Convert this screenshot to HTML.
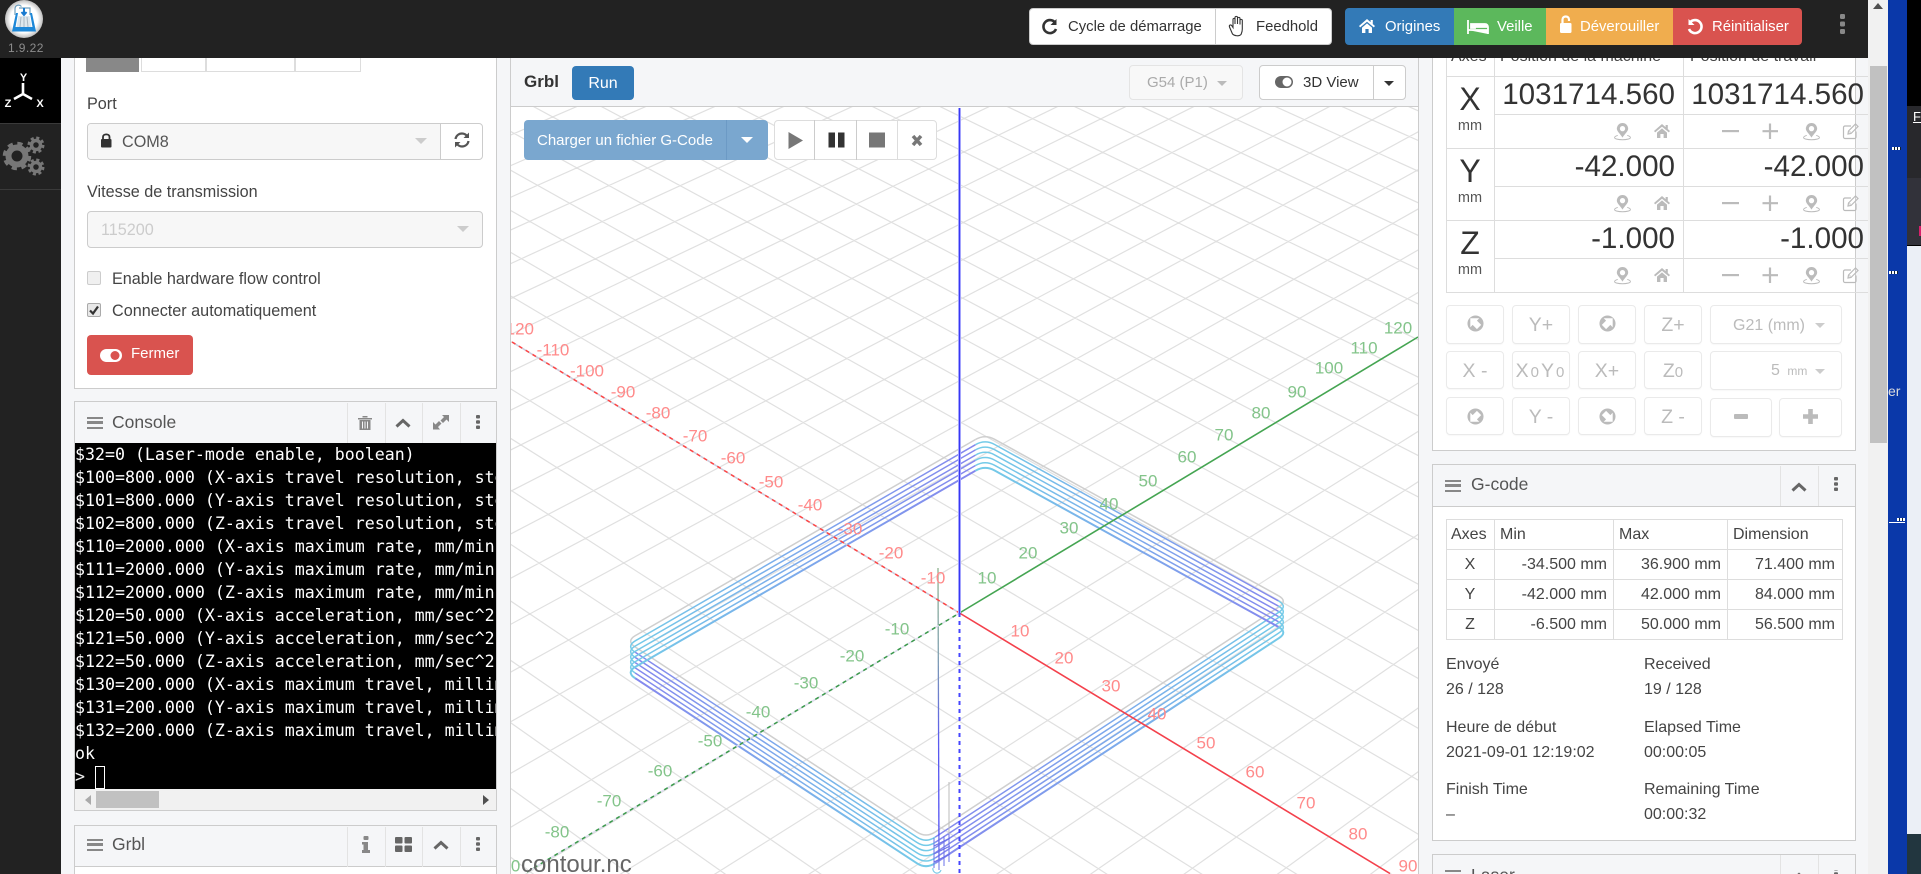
<!DOCTYPE html>
<html><head><meta charset="utf-8"><title>CNCjs</title>
<style>
*{box-sizing:border-box}
html,body{margin:0;padding:0;width:1921px;height:874px;overflow:hidden;background:#f5f6f8;font-family:"Liberation Sans",Arial,sans-serif;color:#333}
#root{position:relative;width:1921px;height:874px;overflow:hidden;background:#f5f6f8}
.a{position:absolute}
.t{position:absolute;white-space:nowrap;font-size:16px;line-height:20px}
.l16{font-size:16.2px}
.panel{position:absolute;background:#fff;border:1px solid #ccc}
.ph{position:absolute;left:0;right:0;top:0;height:42px;background:#f5f6f8;border-bottom:1px solid #ccc}
.ph .title{position:absolute;left:37px;top:10px;font-size:17.5px;line-height:21px;color:#555;white-space:nowrap}
.bars{position:absolute;left:12px;top:15px;width:16px;height:12px;border-top:2.5px solid #888;border-bottom:2.5px solid #888}
.bars:after{content:"";position:absolute;left:0;right:0;top:2.2px;height:2.5px;background:#888}
.div{position:absolute;top:1px;height:40px;width:1px;background:#e3e3e3}
.btn{position:absolute;border:1px solid #eaeaea;border-radius:4px;background:#fff;color:#bbb;text-align:center;box-shadow:0 1px 1px rgba(0,0,0,.03)}
.line{position:absolute;background:#ddd}
.h{height:1px}.v{width:1px}
.caret{position:absolute;width:0;height:0;border-left:6px solid transparent;border-right:6px solid transparent;border-top:6px solid #ccc}
.num{position:absolute;white-space:nowrap;font-size:29.6px;line-height:36px;color:#333;text-align:right}
.c{position:absolute;white-space:nowrap;font-size:16px;line-height:20px;color:#444;margin-top:1px}
.r{text-align:right}
svg{position:absolute;overflow:visible}
.mono div{height:23px;line-height:23px;white-space:pre}
.ctl{font-size:19.5px;line-height:38px}
</style></head><body>
<div id="root">

<svg width="0" height="0" style="position:absolute"><defs>
<symbol id="home" viewBox="0 0 16 14" overflow="visible"><path d="M8 0L16 7 14.8 8.4 8 2.7 1.2 8.4 0 7zM11.6 1h2.2v4L11.6 3.2zM3 8.6L8 4.4 13 8.6V14H9.6V10H6.4V14H3z"/></symbol>
<symbol id="pin" viewBox="0 0 18 18" overflow="visible"><path fill-rule="evenodd" d="M9 0a6 6 0 0 1 6 6c0 3-4 6-6 9.5C7 12 3 9 3 6a6 6 0 0 1 6-6zM9 3.2a2.8 2.8 0 1 0 .01 0z"/><path d="M4 13.2C1.800 13.8.6 14.5.6 15.5c0 1.300 3.800 2.200 8.400 2.200s8.400-.9 8.400-2.200c0-1-1.200-1.700-3.400-2.300" fill="none" stroke-width="1" stroke="#bbb"/></symbol>
<symbol id="edit" viewBox="0 0 16 16" overflow="visible"><path d="M13 8.500V14a1.500 1.500 0 0 1-1.500 1.500H2A1.500 1.500 0 0 1 .5 14V4.500A1.500 1.500 0 0 1 2 3h6" fill="none" stroke="#bbb" stroke-width="1.200"/><path d="M5.500 8L12.500 1 15 3.500 8 10.500 5 11zM6.500 8.500L7.500 9.500" fill="none" stroke="#bbb" stroke-width="1.200"/></symbol>
<symbol id="arr" viewBox="0 0 18 18" overflow="visible"><circle cx="9" cy="9" r="8.500" fill="#bbb"/><path d="M3.500 3.500H13L10.500 6 15 10.500 10.500 15 6 10.500 3.500 13z" fill="#fff"/></symbol>
<symbol id="chev" viewBox="0 0 16 10" overflow="visible"><path d="M1.500 8.500L8 2.500 14.500 8.500" fill="none" stroke="#666" stroke-width="3"/></symbol>
<symbol id="dots" viewBox="0 0 4 14" overflow="visible"><rect x="0" y="0" width="4" height="3.500" rx="1" fill="#666"/><rect x="0" y="5.300" width="4" height="3.500" rx="1" fill="#666"/><rect x="0" y="10.500" width="4" height="3.500" rx="1" fill="#666"/></symbol>
</defs></svg>

<!-- center panel -->
<div class="a" style="left:510px;top:58px;width:909px;height:816px;background:#fff;border-left:1px solid #ccc;border-right:1px solid #ccc"></div>
<svg id="scene" class="a" style="left:511px;top:107px;overflow:hidden" width="907" height="767" viewBox="511 107 907 767">
<defs id="gd"><linearGradient id="pl" gradientUnits="userSpaceOnUse" x1="938" y1="568" x2="938" y2="860"><stop offset="0" stop-color="#8fb38f"/><stop offset=".3" stop-color="#7f9fb0"/><stop offset=".6" stop-color="#5a5af0"/><stop offset="1" stop-color="#4a4af5"/></linearGradient></defs>
<g id="grid" fill="none"></g>
<g id="path" fill="none"></g>
<path d="M938 568L939 860" stroke="url(#pl)" stroke-width="1.300"/>
<path d="M949 782V838" stroke="#bbb" stroke-width="1"/>
<path d="M934 838V868M939 836V870M944 836V866M949 834V862M934 846L950 838M934 854L950 846M934 862L950 854" stroke="#6a70e8" stroke-width="1" fill="none"/>
<path d="M933 868a4 4 0 0 0 8 2" stroke="#7fcbe8" stroke-width="1.200" fill="none"/>
<!-- axes -->
<path d="M512 342L959.500 613" stroke="#ccd" stroke-width="1.500"/>
<path d="M512 342L959.500 613" stroke="#f44" stroke-width="1.500" stroke-dasharray="4 4"/>
<path d="M959.500 613L1390 873.500" stroke="#f4414c" stroke-width="1.600"/>
<path d="M527 872L959.500 613" stroke="#dde" stroke-width="1.500"/>
<path d="M527 872L959.500 613" stroke="#3a9a4a" stroke-width="1.500" stroke-dasharray="4 4"/>
<path d="M959.500 613L1418 337" stroke="#45a552" stroke-width="1.600"/>
<path d="M959.500 108V613" stroke="#c9c9ff" stroke-width="3"/>
<path d="M959.500 108V613" stroke="#3737f5" stroke-width="1.500"/>
<path d="M959.500 613V874" stroke="#4646ff" stroke-width="2" stroke-dasharray="4 4"/>
<g font-family="Liberation Sans" font-size="17" text-anchor="middle" dominant-baseline="central" fill="#ff8a8a">
<text x="1020" y="631">10</text><text x="1064" y="658">20</text><text x="1111" y="686">30</text><text x="1157" y="714">40</text><text x="1206" y="743">50</text><text x="1255" y="772">60</text><text x="1306" y="803">70</text><text x="1358" y="834">80</text><text x="1408" y="866">90</text>
<text x="933" y="578">-10</text><text x="891" y="553">-20</text><text x="850" y="529">-30</text><text x="810" y="505">-40</text><text x="771" y="482">-50</text><text x="733" y="458">-60</text><text x="695" y="436">-70</text><text x="658" y="413">-80</text><text x="623" y="392">-90</text><text x="587" y="371">-100</text><text x="553" y="350">-110</text><text x="517" y="329">-120</text>
</g>
<g font-family="Liberation Sans" font-size="17" text-anchor="middle" dominant-baseline="central" fill="#83c48a">
<text x="987" y="578">10</text><text x="1028" y="553">20</text><text x="1069" y="528">30</text><text x="1109" y="504">40</text><text x="1148" y="481">50</text><text x="1187" y="457">60</text><text x="1224" y="435">70</text><text x="1261" y="413">80</text><text x="1297" y="392">90</text><text x="1329" y="368">100</text><text x="1364" y="348">110</text><text x="1398" y="328">120</text>
<text x="897" y="629">-10</text><text x="852" y="656">-20</text><text x="806" y="683">-30</text><text x="758" y="712">-40</text><text x="710" y="741">-50</text><text x="660" y="771">-60</text><text x="609" y="801">-70</text><text x="557" y="832">-80</text><text x="508" y="866">-90</text>
</g>
<text x="521" y="872" font-family="Liberation Sans" font-size="24" fill="#666">contour.nc</text>
</svg>

<!-- center header -->
<div class="a" style="left:511px;top:58px;width:907px;height:49px;background:#f5f6f8;border-bottom:1px solid #ccc"></div>
<div class="t" style="left:524px;top:72px;font-weight:bold;font-size:17px;color:#333">Grbl</div>
<div class="a" style="left:572px;top:66px;width:62px;height:34px;background:#337ab7;border-radius:4px;color:#fff;text-align:center;font-size:16px;line-height:36px">Run</div>
<div class="a" style="left:1129px;top:65px;width:114px;height:35px;background:#f8f8f8;border:1px solid #e4e4e4;border-radius:4px;color:#aaa;font-size:15px;line-height:33px;padding-left:17px">G54 (P1)<span class="caret" style="left:87px;top:15px;border-top-color:#bbb;border-left-width:5px;border-right-width:5px;border-top-width:5px"></span></div>
<div class="a" style="left:1259px;top:65px;width:147px;height:35px;background:#fff;border:1px solid #ccc;border-radius:4px;color:#333;font-size:15px;line-height:33px">
<span class="a" style="left:43px;top:0;white-space:nowrap">3D View</span>
<span class="a" style="left:113px;top:0;width:1px;height:33px;background:#ccc"></span>
<span class="caret" style="left:124px;top:15px;border-top-color:#333;border-left-width:5px;border-right-width:5px;border-top-width:5px"></span>
<svg style="left:15px;top:10px" width="18" height="12"><rect x="0" y="0" width="18" height="12" rx="6" fill="#666"/><circle cx="12" cy="6" r="4.500" fill="#fff"/></svg>
</div>
<div class="a" style="left:524px;top:120px;width:244px;height:40px;background:#7aa7cf;border-radius:4px;color:#fff;font-size:15px;line-height:42px;padding-left:13px">Charger un fichier G-Code
<span class="a" style="left:202px;top:0;width:1px;height:40px;background:#6c9ac5"></span>
<span class="caret" style="left:217px;top:17px;border-top-color:#fff"></span></div>
<div class="a" style="left:774px;top:120px;width:163px;height:40px;background:#fff;border:1px solid #ddd;border-radius:4px"></div>
<div class="a" style="left:814px;top:120px;width:1px;height:40px;background:#ccc"></div>
<div class="a" style="left:856px;top:120px;width:1px;height:40px;background:#ccc"></div>
<div class="a" style="left:897px;top:120px;width:1px;height:40px;background:#ddd"></div>
<svg style="left:774px;top:120px" width="163" height="40">
<path d="M14.500 12V29L29 20.500z" fill="#777"/>
<rect x="54.500" y="12.500" width="6.500" height="15" fill="#333"/><rect x="64" y="12.500" width="6.500" height="15" fill="#333"/>
<rect x="95" y="12.500" width="16" height="15" fill="#777"/>
<path d="M139 16L147 25M147 16L139 25" stroke="#777" stroke-width="3.500"/>
</svg>

<!-- Right column: axes widget -->
<div class="a" style="left:1868px;top:0;width:20px;height:874px;background:#f1f1f1"></div>
<div class="a" style="left:1870px;top:66px;width:17px;height:377px;background:#c1c1c1"></div>
<svg style="left:1873px;top:3px" width="10" height="7"><path d="M5 0L10 6H0z" fill="#505050"/></svg>
<div class="a" style="left:1888px;top:0;width:19px;height:874px;background:#0a38a9"></div>
<div class="a" style="left:1907px;top:0;width:14px;height:106px;background:#000"></div>
<div class="a" style="left:1907px;top:106px;width:14px;height:72px;background:#28282c"></div>
<div class="a" style="left:1907px;top:178px;width:14px;height:67px;background:#32323a"></div>
<div class="a" style="left:1907px;top:245px;width:14px;height:1px;background:#000"></div>
<div class="a" style="left:1907px;top:246px;width:14px;height:588px;background:#ebeff6"></div>
<div class="a" style="left:1907px;top:834px;width:14px;height:40px;background:#22363f"></div>
<div class="a" style="left:1919px;top:226px;width:2px;height:10px;background:#d8206a"></div>
<div class="a" style="left:1913px;top:108px;overflow:hidden;width:8px;height:18px;font-size:13px;line-height:18px;color:#fff;text-decoration:underline">Fi</div>
<div class="a" style="left:1892px;top:147px;width:9px;height:3px;background:repeating-linear-gradient(90deg,#fff 0 2px,#123 2px 3px)"></div>
<div class="a" style="left:1889px;top:271px;width:9px;height:3px;background:repeating-linear-gradient(90deg,#fff 0 2px,#123 2px 3px)"></div>
<div class="a" style="left:1888px;top:383px;font-size:14px;line-height:16px;color:#ddd">er</div>
<div class="a" style="left:1889px;top:519px;width:16px;height:4px;border-bottom:1px solid #fff"></div>
<div class="a" style="left:1897px;top:518px;width:8px;height:3px;background:repeating-linear-gradient(90deg,#fff 0 2px,#123 2px 3px)"></div>

<div class="panel" style="left:1432px;top:58px;width:424px;height:393px;border-top:0"></div>
<div class="a" style="left:1432px;top:58px;width:436px;height:18px;overflow:hidden">
<div class="t" style="left:19px;top:-11px;color:#444">Axes</div>
<div class="t" style="left:68px;top:-11px;color:#444">Position de la machine</div>
<div class="t" style="left:258px;top:-11px;color:#444">Position de travail</div>
</div>

<!-- table lines -->
<div class="line v" style="left:1446px;top:58px;height:235px"></div>
<div class="line v" style="left:1494px;top:58px;height:235px"></div>
<div class="line v" style="left:1683px;top:58px;height:235px"></div>
<div class="line h" style="left:1446px;top:76px;width:422px"></div>
<div class="line h" style="left:1494px;top:114px;width:374px"></div>
<div class="line h" style="left:1446px;top:148px;width:422px"></div>
<div class="line h" style="left:1494px;top:186px;width:374px"></div>
<div class="line h" style="left:1446px;top:220px;width:422px"></div>
<div class="line h" style="left:1494px;top:258px;width:374px"></div>
<div class="line h" style="left:1446px;top:292px;width:422px"></div>

<div class="num" style="left:1450px;width:40px;top:81px;text-align:center;font-size:32px">X</div>
<div class="num" style="left:1450px;width:40px;top:153px;text-align:center;font-size:32px">Y</div>
<div class="num" style="left:1450px;width:40px;top:225px;text-align:center;font-size:32px">Z</div>
<div class="t" style="left:1450px;width:40px;top:116px;text-align:center;font-size:14.500px;color:#555">mm</div>
<div class="t" style="left:1450px;width:40px;top:188px;text-align:center;font-size:14.500px;color:#555">mm</div>
<div class="t" style="left:1450px;width:40px;top:260px;text-align:center;font-size:14.500px;color:#555">mm</div>

<div class="num" style="left:1475px;width:200px;top:77px">1031714.560</div>
<div class="num" style="left:1664px;width:200px;top:77px">1031714.560</div>
<div class="num" style="left:1475px;width:200px;top:149px">-42.000</div>
<div class="num" style="left:1664px;width:200px;top:149px">-42.000</div>
<div class="num" style="left:1475px;width:200px;top:221px">-1.000</div>
<div class="num" style="left:1664px;width:200px;top:221px">-1.000</div>

<svg style="left:1610px;top:122px" width="250" height="170" fill="#bbb">
<g>
<use href="#pin" x="4" y="1" width="17" height="17"/>
<use href="#home" x="44" y="2" width="16" height="14"/>
<rect x="112" y="8" width="17" height="2.200"/>
<path d="M160 1.500V17M152.500 9.200H168" stroke="#bbb" stroke-width="2.200" fill="none"/>
<use href="#pin" x="193" y="1" width="17" height="17"/>
<use href="#edit" x="233" y="1" width="16" height="16"/>
</g>
<g transform="translate(0,72)"><use href="#pin" x="4" y="1" width="17" height="17"/><use href="#home" x="44" y="2" width="16" height="14"/><rect x="112" y="8" width="17" height="2.200"/><path d="M160 1.500V17M152.500 9.200H168" stroke="#bbb" stroke-width="2.200" fill="none"/><use href="#pin" x="193" y="1" width="17" height="17"/><use href="#edit" x="233" y="1" width="16" height="16"/></g>
<g transform="translate(0,144)"><use href="#pin" x="4" y="1" width="17" height="17"/><use href="#home" x="44" y="2" width="16" height="14"/><rect x="112" y="8" width="17" height="2.200"/><path d="M160 1.500V17M152.500 9.200H168" stroke="#bbb" stroke-width="2.200" fill="none"/><use href="#pin" x="193" y="1" width="17" height="17"/><use href="#edit" x="233" y="1" width="16" height="16"/></g>
</svg>

<!-- jog -->
<div class="btn ctl" style="left:1446px;top:305px;width:58px;height:39px"></div>
<div class="btn ctl" style="left:1512px;top:305px;width:58px;height:39px">Y+</div>
<div class="btn ctl" style="left:1578px;top:305px;width:58px;height:39px"></div>
<div class="btn ctl" style="left:1644px;top:305px;width:58px;height:39px">Z+</div>
<div class="btn" style="left:1710px;top:305px;width:132px;height:39px;font-size:16px;line-height:39px;text-align:left;padding-left:22px">G21 (mm)<span class="caret" style="left:104px;top:17px;border-left-width:5px;border-right-width:5px;border-top-width:5px"></span></div>
<div class="btn ctl" style="left:1446px;top:351px;width:58px;height:38px">X -</div>
<div class="btn ctl" style="left:1512px;top:351px;width:58px;height:38px;letter-spacing:2px">X<span style="font-size:15px">0</span>Y<span style="font-size:15px">0</span></div>
<div class="btn ctl" style="left:1578px;top:351px;width:58px;height:38px">X+</div>
<div class="btn ctl" style="left:1644px;top:351px;width:58px;height:38px">Z<span style="font-size:15px">0</span></div>
<div class="btn" style="left:1710px;top:351px;width:132px;height:39px;font-size:16px;line-height:38px;text-align:left;padding-left:60px">5 <span style="font-size:12px;margin-left:3px">mm</span><span class="caret" style="left:104px;top:17px;border-left-width:5px;border-right-width:5px;border-top-width:5px"></span></div>
<div class="btn ctl" style="left:1446px;top:397px;width:58px;height:38px"></div>
<div class="btn ctl" style="left:1512px;top:397px;width:58px;height:38px">Y -</div>
<div class="btn ctl" style="left:1578px;top:397px;width:58px;height:38px"></div>
<div class="btn ctl" style="left:1644px;top:397px;width:58px;height:38px">Z -</div>
<div class="btn ctl" style="left:1710px;top:398px;width:62px;height:39px"></div>
<div class="btn ctl" style="left:1779px;top:398px;width:63px;height:39px"></div>
<svg style="left:1467px;top:315px" width="17" height="17"><use href="#arr" width="17" height="17"/></svg>
<svg style="left:1599px;top:315px" width="17" height="17"><g transform="rotate(90 8.500 8.500)"><use href="#arr" width="17" height="17"/></g></svg>
<svg style="left:1467px;top:408px" width="17" height="17"><g transform="rotate(-90 8.500 8.500)"><use href="#arr" width="17" height="17"/></g></svg>
<svg style="left:1599px;top:408px" width="17" height="17"><g transform="rotate(180 8.500 8.500)"><use href="#arr" width="17" height="17"/></g></svg>
<div class="a" style="left:1734px;top:414px;width:14px;height:5px;background:#bbb;border-radius:1px"></div>
<svg style="left:1803px;top:409px" width="15" height="15"><path d="M5.200 0H9.800V5.200H15V9.800H9.800V15H5.200V9.800H0V5.200H5.200z" fill="#bbb"/></svg>

<!-- G-code -->
<div class="panel" style="left:1432px;top:464px;width:424px;height:377px">
<div class="ph"><div class="bars"></div><div class="title" style="left:38px;top:9px">G-code</div>
<div class="div" style="left:347px"></div><div class="div" style="left:385px"></div></div>
</div>
<svg style="left:1791px;top:482px" width="16" height="10"><use href="#chev" width="16" height="10"/></svg>
<svg style="left:1834px;top:477px" width="4" height="14"><use href="#dots" width="4" height="14"/></svg>
<div class="a" style="left:1446px;top:519px;width:397px;height:121px;border:1px solid #ddd"></div>
<div class="line h" style="left:1446px;top:549px;width:397px"></div>
<div class="line h" style="left:1446px;top:579px;width:397px"></div>
<div class="line h" style="left:1446px;top:609px;width:397px"></div>
<div class="line v" style="left:1494px;top:519px;height:121px"></div>
<div class="line v" style="left:1613px;top:519px;height:121px"></div>
<div class="line v" style="left:1727px;top:519px;height:121px"></div>
<div class="c" style="left:1451px;top:524px">Axes</div><div class="c" style="left:1500px;top:524px">Min</div><div class="c" style="left:1619px;top:524px">Max</div><div class="c" style="left:1733px;top:524px">Dimension</div>
<div class="c" style="left:1446px;width:48px;text-align:center;top:554px">X</div>
<div class="c" style="left:1446px;width:48px;text-align:center;top:584px">Y</div>
<div class="c" style="left:1446px;width:48px;text-align:center;top:614px">Z</div>
<div class="c r" style="left:1467px;width:140px;top:554px">-34.500 mm</div><div class="c r" style="left:1581px;width:140px;top:554px">36.900 mm</div><div class="c r" style="left:1695px;width:140px;top:554px">71.400 mm</div>
<div class="c r" style="left:1467px;width:140px;top:584px">-42.000 mm</div><div class="c r" style="left:1581px;width:140px;top:584px">42.000 mm</div><div class="c r" style="left:1695px;width:140px;top:584px">84.000 mm</div>
<div class="c r" style="left:1467px;width:140px;top:614px">-6.500 mm</div><div class="c r" style="left:1581px;width:140px;top:614px">50.000 mm</div><div class="c r" style="left:1695px;width:140px;top:614px">56.500 mm</div>
<div class="c" style="left:1446px;top:654px">Envoyé</div><div class="c" style="left:1644px;top:654px">Received</div>
<div class="c" style="left:1446px;top:679px">26 / 128</div><div class="c" style="left:1644px;top:679px">19 / 128</div>
<div class="c" style="left:1446px;top:717px">Heure de début</div><div class="c" style="left:1644px;top:717px">Elapsed Time</div>
<div class="c" style="left:1446px;top:742px">2021-09-01 12:19:02</div><div class="c" style="left:1644px;top:742px">00:00:05</div>
<div class="c" style="left:1446px;top:779px">Finish Time</div><div class="c" style="left:1644px;top:779px">Remaining Time</div>
<div class="c" style="left:1446px;top:804px">–</div><div class="c" style="left:1644px;top:804px">00:00:32</div>

<!-- Laser widget, clipped at frame bottom -->
<div class="a" style="left:1432px;top:854px;width:424px;height:20px;overflow:hidden;background:#f5f6f8;border:1px solid #ccc;border-bottom:0">
<div class="bars" style="left:12px;top:15px"></div>
<div class="a" style="left:38px;top:10px;font-size:17.5px;line-height:21px;color:#555;white-space:nowrap;height:9px;overflow:hidden">Laser</div>
<div class="div" style="left:347px;height:19px;top:0"></div><div class="div" style="left:385px;height:19px;top:0"></div>
</div>
<div class="a" style="left:1791px;top:870px;width:50px;height:4px;overflow:hidden"><svg style="left:0;top:2px" width="16" height="10"><use href="#chev" width="16" height="10"/></svg><svg style="left:43px;top:-3px" width="4" height="14"><use href="#dots" width="4" height="14"/></svg></div>

<!-- top bar -->
<div class="a" style="left:0;top:0;width:1868px;height:58px;background:#222"></div>
<!-- left sidebar -->
<div class="a" style="left:0;top:58px;width:61px;height:816px;background:#222"></div>
<div class="a" style="left:0;top:58px;width:61px;height:65px;background:#000"></div>
<div class="a" style="left:0;top:123px;width:61px;height:1px;background:#3a3a3a"></div>
<div class="a" style="left:0;top:189px;width:61px;height:1px;background:#3a3a3a"></div>
<svg style="left:0;top:0" width="61" height="58">
<defs><radialGradient id="lg"><stop offset=".72" stop-color="#fff"/><stop offset="1" stop-color="#bdbdbd"/></radialGradient></defs>
<circle cx="24" cy="19" r="19" fill="url(#lg)"/>
<path d="M15 15V9C15 5 19 4 21.500 6.500M19 8H30V15" stroke="#6f9fbe" stroke-width="1.200" fill="none"/>
<path d="M18.500 16H29.500L31.500 27H16.500z" fill="#dfe8ee"/>
<path d="M21 17L20 27M24 17V27M27 17L28 27" stroke="#aab8c2" stroke-width="1"/>
<path d="M16 13L12 31.500H36L32 13H30L32.500 27H15.500L18 13z" fill="#1e88d8"/>
<path d="M24 8V14M21.500 12L24 15 26.500 12" stroke="#1a7bd0" stroke-width="2" fill="none"/>
</svg>
<div class="t" style="left:8px;top:39px;font-size:12px;line-height:18px;color:#8c8c8c;letter-spacing:.4px">1.9.22</div>
<svg style="left:0;top:58px" width="61" height="65">
<path d="M23 25V36M23 36L14 41M23 36L32 41" stroke="#fff" stroke-width="2.600" fill="none"/>
<text x="23.500" y="23" font-family="Liberation Sans" font-weight="bold" font-size="11" fill="#fff" text-anchor="middle">Y</text>
<text x="8" y="49" font-family="Liberation Sans" font-weight="bold" font-size="11" fill="#fff" text-anchor="middle">Z</text>
<text x="40" y="49" font-family="Liberation Sans" font-weight="bold" font-size="11" fill="#fff" text-anchor="middle">X</text>
</svg>
<svg style="left:0;top:124px" width="61" height="65">
<g fill="none" stroke="#777">
<circle cx="17" cy="32" r="8.500" stroke-width="6"/><circle cx="17" cy="32" r="12" stroke-width="4.500" stroke-dasharray="5 4.420"/>
<circle cx="36" cy="21" r="4.500" stroke-width="3.500"/><circle cx="36" cy="21" r="7" stroke-width="3" stroke-dasharray="3 2.500"/>
<circle cx="36" cy="43" r="4.500" stroke-width="3.500"/><circle cx="36" cy="43" r="7" stroke-width="3" stroke-dasharray="3 2.500"/>
</g></svg>

<!-- header buttons -->
<div class="a" style="left:1029px;top:8px;width:303px;height:37px;background:#fff;border:1px solid #ccc;border-radius:4px"></div>
<div class="a" style="left:1215px;top:8px;width:1px;height:37px;background:#ccc"></div>
<div class="t" style="left:1068px;top:17px;font-size:14.860px;color:#333">Cycle de démarrage</div>
<div class="t" style="left:1256px;top:17px;font-size:14.860px;color:#333">Feedhold</div>
<svg style="left:1042px;top:18px" width="16" height="17"><path d="M13 4.500A6.500 6.500 0 1 0 14 11" fill="none" stroke="#333" stroke-width="2.600"/><path d="M14.500 1V7H8.500z" fill="#333"/></svg>
<svg style="left:1228px;top:14px" width="18" height="25"><path d="M4.500 20L1.500 13C.8 11 3 10 4 12L5 13.500V5.500C5 4 7 4 7 5.500V10V3.500C7 2 9.500 2 9.500 3.500V10V4.500C9.500 3 12 3 12 4.500V10.500V6.500C12 5 14.300 5 14.300 6.500V15C14.300 18 13.500 19 13 20.500C11 22.500 6.500 22 4.500 20Z" fill="#fff" stroke="#333" stroke-width="1.100"/></svg>

<div class="a" style="left:1345px;top:8px;width:109px;height:37px;background:#337ab7;border-radius:4px 0 0 4px"></div>
<div class="a" style="left:1454px;top:8px;width:92px;height:37px;background:#5cb85c"></div>
<div class="a" style="left:1546px;top:8px;width:127px;height:37px;background:#f0ad4e"></div>
<div class="a" style="left:1673px;top:8px;width:129px;height:37px;background:#d9534f;border-radius:0 4px 4px 0"></div>
<svg style="left:1359px;top:19px" width="16" height="14" fill="#fff"><use href="#home" width="16" height="14"/></svg>
<svg style="left:1467px;top:20px" width="22" height="14"><path d="M1 0V14M1 10H21V14M21 7V10M4 4H8V8H4zM9 4H18C20 4 21 5.500 21 7H9z" stroke="#fff" stroke-width="1.800" fill="#fff"/></svg>
<svg style="left:1560px;top:15px" width="12" height="20"><path d="M2.500 8V4.500C2.500.5 9 .5 9 4.500V6" stroke="#fff" stroke-width="2.200" fill="none"/><rect x="0" y="8" width="11.500" height="10" rx="1.200" fill="#fff"/></svg>
<svg style="left:1687px;top:18px" width="16" height="17"><path d="M3 4.500A6.500 6.500 0 1 1 2 11" fill="none" stroke="#fff" stroke-width="2.600"/><path d="M1.500 1V7H7.500z" fill="#fff"/></svg>
<div class="t" style="left:1385px;top:17px;font-size:14.860px;color:#fff">Origines</div>
<div class="t" style="left:1497px;top:17px;font-size:14.860px;color:#fff">Veille</div>
<div class="t" style="left:1580px;top:17px;font-size:14.860px;color:#fff">Déverouiller</div>
<div class="t" style="left:1712px;top:17px;font-size:14.860px;color:#fff">Réinitialiser</div>
<svg style="left:1840px;top:14px" width="5" height="20"><rect width="5" height="5" rx="1.200" fill="#888"/><rect y="7.500" width="5" height="5" rx="1.200" fill="#888"/><rect y="15" width="5" height="5" rx="1.200" fill="#888"/></svg>

<!-- Left: connection panel -->
<div class="panel" style="left:74px;top:58px;width:423px;height:331px;border-top:0"></div>
<div class="a" style="left:86px;top:58px;width:53px;height:14px;background:#888"></div>
<div class="a" style="left:141px;top:58px;width:65px;height:14px;background:#fff;border:1px solid #ddd;border-top:0"></div>
<div class="a" style="left:206px;top:58px;width:89px;height:14px;background:#fff;border:1px solid #ddd;border-top:0"></div>
<div class="a" style="left:295px;top:58px;width:66px;height:14px;background:#fff;border:1px solid #ddd;border-top:0"></div>
<div class="t l16" style="left:87px;top:94px;color:#444">Port</div>
<div class="a" style="left:87px;top:123px;width:396px;height:37px;border:1px solid #ccc;border-radius:4px;background:#fff"></div>
<div class="a" style="left:88px;top:124px;width:353px;height:35px;background:#f7f7f7;border-right:1px solid #ccc;border-radius:3px 0 0 3px"></div>
<svg style="left:100px;top:132px" width="13" height="17"><path d="M3 8V5C3 1.500 9.500 1.500 9.500 5V8" stroke="#333" stroke-width="1.800" fill="none"/><rect x="1" y="7" width="10.500" height="8.500" rx="1" fill="#333"/></svg>
<div class="t l16" style="left:122px;top:132px;color:#555">COM8</div>
<div class="caret" style="left:415px;top:138px;border-top-color:#ccc"></div>
<svg style="left:454px;top:132px" width="16" height="16"><path d="M1.500 7C2 3.500 5 1.500 8 1.500C10.500 1.500 12 2.500 13.500 4.500M14.500 9C14 12.500 11 14.500 8 14.500C5.500 14.500 4 13.500 2.500 11.500" fill="none" stroke="#555" stroke-width="2.200"/><path d="M15 .5V6H9.500zM1 15.500V10H6.500z" fill="#555"/></svg>
<div class="t l16" style="left:87px;top:182px;color:#444">Vitesse de transmission</div>
<div class="a" style="left:87px;top:211px;width:396px;height:37px;border:1px solid #ccc;border-radius:4px;background:#f7f7f7"></div>
<div class="t l16" style="left:101px;top:220px;color:#ccc">115200</div>
<div class="caret" style="left:457px;top:226px;border-top-color:#ccc"></div>
<div class="a" style="left:87px;top:271px;width:14px;height:14px;border:1px solid #ccc;border-radius:2px;background:#f0f0f0"></div>
<div class="t l16" style="left:112px;top:269px;color:#444">Enable hardware flow control</div>
<div class="a" style="left:87px;top:303px;width:14px;height:14px;border:1px solid #aaa;border-radius:2px;background:#e8e8e8"></div>
<svg style="left:87px;top:303px" width="14" height="14"><path d="M3 7.500L6 10.500 11 3.500" stroke="#333" stroke-width="2.200" fill="none"/></svg>
<div class="t l16" style="left:112px;top:301px;color:#444">Connecter automatiquement</div>
<div class="a" style="left:87px;top:335px;width:106px;height:40px;background:#d9534f;border-radius:4px;color:#fff;font-size:15px;line-height:38px;padding-left:44px">Fermer</div>
<svg style="left:100px;top:349px" width="22" height="13"><rect width="22" height="13" rx="6.500" fill="#fff"/><circle cx="15" cy="6.500" r="4.500" fill="#d9534f"/></svg>

<!-- Console -->
<div class="panel" style="left:74px;top:401px;width:423px;height:410px">
<div class="ph"><div class="bars"></div><div class="title">Console</div>
<div class="div" style="left:272px"></div><div class="div" style="left:310px"></div><div class="div" style="left:347px"></div><div class="div" style="left:385px"></div></div>
</div>
<svg style="left:358px;top:415px" width="14" height="15"><path d="M4.500 2.500V1H9.500V2.500M0 3H14V4.500H0zM1.500 5H12.500V15H1.500z" fill="#888"/><path d="M4.500 6.500V13.500M7 6.500V13.500M9.500 6.500V13.500" stroke="#f5f6f8" stroke-width="1"/></svg>
<svg style="left:395px;top:418px" width="16" height="10"><use href="#chev" width="16" height="10"/></svg>
<svg style="left:433px;top:414px" width="16" height="16"><path d="M9 1H16V8L13.500 5.500 10 9 7.500 6.500 11 3zM0 8L2.500 10.500 6 7 8.500 9.500 5 13 7 15.500H0z" fill="#888"/></svg>
<svg style="left:476px;top:415px" width="4" height="14"><use href="#dots" width="4" height="14"/></svg>
<div class="a mono" style="left:75px;top:443px;width:421px;height:346px;background:#000;color:#fff;overflow:hidden;font-family:'DejaVu Sans Mono',monospace;font-size:16.600px">
<div>$32=0 (Laser-mode enable, boolean)</div>
<div>$100=800.000 (X-axis travel resolution, step/mm)</div>
<div>$101=800.000 (Y-axis travel resolution, step/mm)</div>
<div>$102=800.000 (Z-axis travel resolution, step/mm)</div>
<div>$110=2000.000 (X-axis maximum rate, mm/min)</div>
<div>$111=2000.000 (Y-axis maximum rate, mm/min)</div>
<div>$112=2000.000 (Z-axis maximum rate, mm/min)</div>
<div>$120=50.000 (X-axis acceleration, mm/sec^2)</div>
<div>$121=50.000 (Y-axis acceleration, mm/sec^2)</div>
<div>$122=50.000 (Z-axis acceleration, mm/sec^2)</div>
<div>$130=200.000 (X-axis maximum travel, millimeters)</div>
<div>$131=200.000 (Y-axis maximum travel, millimeters)</div>
<div>$132=200.000 (Z-axis maximum travel, millimeters)</div>
<div>ok</div>
<div><span style="color:#eee">&gt;</span> </div>
</div>
<div class="a" style="left:95px;top:766px;width:10px;height:23px;border:1px solid #fff;background:#000"></div>
<div class="a" style="left:75px;top:789px;width:421px;height:21px;background:#f1f1f1"></div>
<div class="a" style="left:96px;top:791px;width:63px;height:17px;background:#c1c1c1"></div>
<svg style="left:82px;top:793px" width="410" height="14"><path d="M9 2V12L3 7z" fill="#aaa"/><path d="M401 2V12L407 7z" fill="#505050"/></svg>

<!-- Grbl widget -->
<div class="panel" style="left:74px;top:825px;width:423px;height:49px;border-bottom:0">
<div class="ph" style="height:41px"><div class="bars" style="top:13px"></div><div class="title" style="top:8px">Grbl</div>
<div class="div" style="left:272px"></div><div class="div" style="left:310px"></div><div class="div" style="left:347px"></div><div class="div" style="left:385px"></div></div>
</div>
<svg style="left:362px;top:836px" width="8" height="17"><rect x="1.500" width="5" height="4" rx="1" fill="#888"/><path d="M0 6H6V14H8V17H0V14H1.500V8.500H0z" fill="#888"/></svg>
<svg style="left:395px;top:837px" width="17" height="15"><rect width="7.500" height="6.500" rx="1" fill="#666"/><rect x="9.500" width="7.500" height="6.500" rx="1" fill="#666"/><rect y="8.500" width="7.500" height="6.500" rx="1" fill="#666"/><rect x="9.500" y="8.500" width="7.500" height="6.500" rx="1" fill="#666"/></svg>
<svg style="left:433px;top:840px" width="16" height="10"><use href="#chev" width="16" height="10"/></svg>
<svg style="left:476px;top:837px" width="4" height="14"><use href="#dots" width="4" height="14"/></svg>

</div>
<script>
(function(){
var NS="http://www.w3.org/2000/svg",ox=959.5,oy=613;
function P(x,y){var d=1-.001*x+.0011*y;return [ox+(4.25*x+4.3*y)/d,oy+(2.571*x-2.589*y)/d];}
var g=document.getElementById("grid"),s="";
for(var k=-300;k<=300;k+=10){var a=P(k,-300),b=P(k,300),c=P(-300,k),e=P(300,k);
s+="M"+a[0].toFixed(1)+" "+a[1].toFixed(1)+"L"+b[0].toFixed(1)+" "+b[1].toFixed(1)+"M"+c[0].toFixed(1)+" "+c[1].toFixed(1)+"L"+e[0].toFixed(1)+" "+e[1].toFixed(1);}
var p=document.createElementNS(NS,"path");p.setAttribute("d",s);p.setAttribute("stroke","#e0e0e0");p.setAttribute("stroke-width","1.200");p.setAttribute("fill","none");g.appendChild(p);
var C=[[626,641],[985,434],[1288,601],[926,838]],dy=5.2,r=11,tp=document.getElementById("path"),gd=document.getElementById("gd");
function unit(a,b){var dx=b[0]-a[0],d2=b[1]-a[1],l=Math.sqrt(dx*dx+d2*d2);return [dx/l,d2/l];}
for(var i=0;i<7;i++){for(var j=0;j<4;j++){
var pr=C[(j+3)%4],A=C[j],B=C[(j+1)%4];var u0=unit(pr,A),u1=unit(A,B);var off=i*dy;
var d="M"+(A[0]-r*u0[0])+" "+(A[1]-r*u0[1]+off)+"Q"+A[0]+" "+(A[1]+off)+" "+(A[0]+r*u1[0])+" "+(A[1]+r*u1[1]+off)+"L"+(B[0]-r*u1[0])+" "+(B[1]-r*u1[1]+off);
var q=document.createElementNS(NS,"path");q.setAttribute("d",d);q.setAttribute("stroke-width",i==6?"2":"1.5");
if(i==0){q.setAttribute("stroke","#cfcfcf");}else{
var id="g"+i+"_"+j,lg=document.createElementNS(NS,"linearGradient");lg.setAttribute("id",id);lg.setAttribute("gradientUnits","userSpaceOnUse");
lg.setAttribute("x1",A[0]);lg.setAttribute("y1",A[1]+off);lg.setAttribute("x2",B[0]);lg.setAttribute("y2",B[1]+off);
lg.innerHTML='<stop offset="0" stop-color="#74cbe8"/><stop offset="1" stop-color="#8585ee"/>';gd.appendChild(lg);q.setAttribute("stroke","url(#"+id+")");}
tp.appendChild(q);}}
})();
</script>
</body></html>
